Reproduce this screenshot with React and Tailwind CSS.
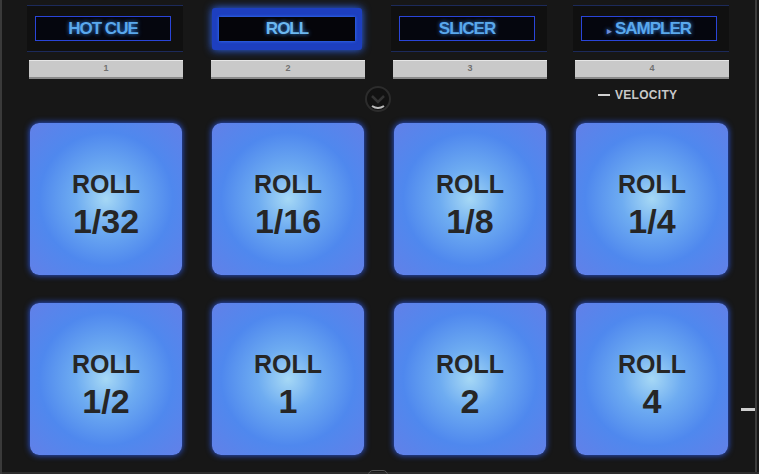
import React from 'react';

const modes = ['HOT CUE', 'ROLL', 'SLICER', 'SAMPLER'];
const pads = [
    ['1/32', '1/16', '1/8', '1/4'],
    ['1/2', '1', '2', '4'],
];

function ModeButton({ label, active }) {
    if (active) {
        return (
            <div className="h-[47px] flex items-center">
                <div className="w-[150px] h-[42px] rounded-[3px] bg-[#1d3fc0] px-[7px] py-[9px] shadow-[0_0_8px_#2f6bff] flex">
                    <div className="flex-1 bg-[#05050a] flex items-center justify-center shadow-[0_0_3px_#3a7bff]">
                        <span className="text-[17px] font-bold tracking-[-1px] text-[#6cb8f0] [text-shadow:0_0_4px_#3d8de8]">{label}</span>
                    </div>
                </div>
            </div>
        );
    }
    return (
        <div className="h-[47px] -ml-[3px] w-[156px] bg-[#101010] border-t border-b border-[#1c2a5a] flex items-center pl-[8px]">
            <div className="w-[136px] h-[25px] border border-[#2a45d8] bg-[#05060e] flex items-center justify-center">
                <span className="text-[17px] font-bold tracking-[-1px] text-[#5aa8ec] [text-shadow:0_0_4px_#2f7fe0]">
                    {label === 'SAMPLER' && <span className="text-[9px] mr-[4px] text-[#6a8ad8]">▸</span>}
                    {label}
                </span>
            </div>
        </div>
    );
}

function Pad({ value }) {
    return (
        <div className="w-[152px] h-[152px] rounded-[9px] pt-[12px] bg-[radial-gradient(circle_at_50%_50%,#a6d8f5_0%,#6eacf1_28%,#4f88ee_62%,#6280e8_100%)] shadow-[0_0_6px_#2d5cf0] flex flex-col items-center justify-center text-[#262626] font-bold leading-none">
            <span className="text-[25px]">ROLL</span>
            <span className="text-[34px] mt-[7px]">{value}</span>
        </div>
    );
}

export default function App() {
    return (
        <div className="relative w-[759px] h-[474px] overflow-hidden bg-[#171717] border-l-2 border-[#3a3a3a] font-['Liberation_Sans',Arial,sans-serif]">
            <div className="absolute right-[2px] top-0 bottom-0 w-[2px] bg-[#3c3c3c]" />
            <div className="absolute left-0 right-0 bottom-0 h-[2px] bg-[#2c2c2c]" />

            <div className="pl-[28px] pt-[5px]">
                <div className="grid grid-cols-[152px_152px_152px_152px] gap-x-[30px]">
                    {modes.map((m) => (
                        <ModeButton key={m} label={m} active={m === 'ROLL'} />
                    ))}
                </div>

                <div className="grid grid-cols-[152px_152px_152px_152px] gap-x-[30px] mt-[8px]">
                    {[1, 2, 3, 4].map((n) => (
                        <div key={n} className="h-[19px] -ml-[1px] w-[154px] bg-[#c9c9c9] border-t border-[#e6e6e6] border-b-2 border-b-[#8a8a8a] flex items-center justify-center">
                            <span className="text-[9px] text-[#707070] font-bold">{n}</span>
                        </div>
                    ))}
                </div>

                <div className="relative h-[44px] flex">
                    <div className="absolute left-[333px] top-[5px]">
                        <svg width="30" height="30" viewBox="0 0 30 30">
                            <circle cx="15" cy="15" r="12" fill="#121212" stroke="#2c2c2c" strokeWidth="2" />
                            <path d="M9 12 L15 18 L21 12" fill="none" stroke="#333" strokeWidth="2.5" />
                            <path d="M9 22 Q15 26 21 22" fill="none" stroke="#bdbdbd" strokeWidth="2" />
                        </svg>
                    </div>
                    <div className="absolute left-[568px] top-[7px] flex items-center gap-[5px]">
                        <div className="w-[12px] h-[2px] bg-[#d0d0d0]" />
                        <span className="text-[12px] font-bold text-[#c8c8c8] tracking-[0.3px]">VELOCITY</span>
                    </div>
                </div>

                <div className="flex flex-col gap-[28px]">
                    {pads.map((row, i) => (
                        <div key={i} className="grid grid-cols-[152px_152px_152px_152px] gap-x-[30px]">
                            {row.map((v) => (
                                <Pad key={v} value={v} />
                            ))}
                        </div>
                    ))}
                </div>
            </div>

            <div className="absolute right-[4px] top-[408px] w-[14px] h-[3px] bg-[#cfcfcf]" />
            <div className="absolute left-[366px] bottom-[-6px] w-[20px] h-[10px] rounded-full border border-[#555]" />
        </div>
    );
}
